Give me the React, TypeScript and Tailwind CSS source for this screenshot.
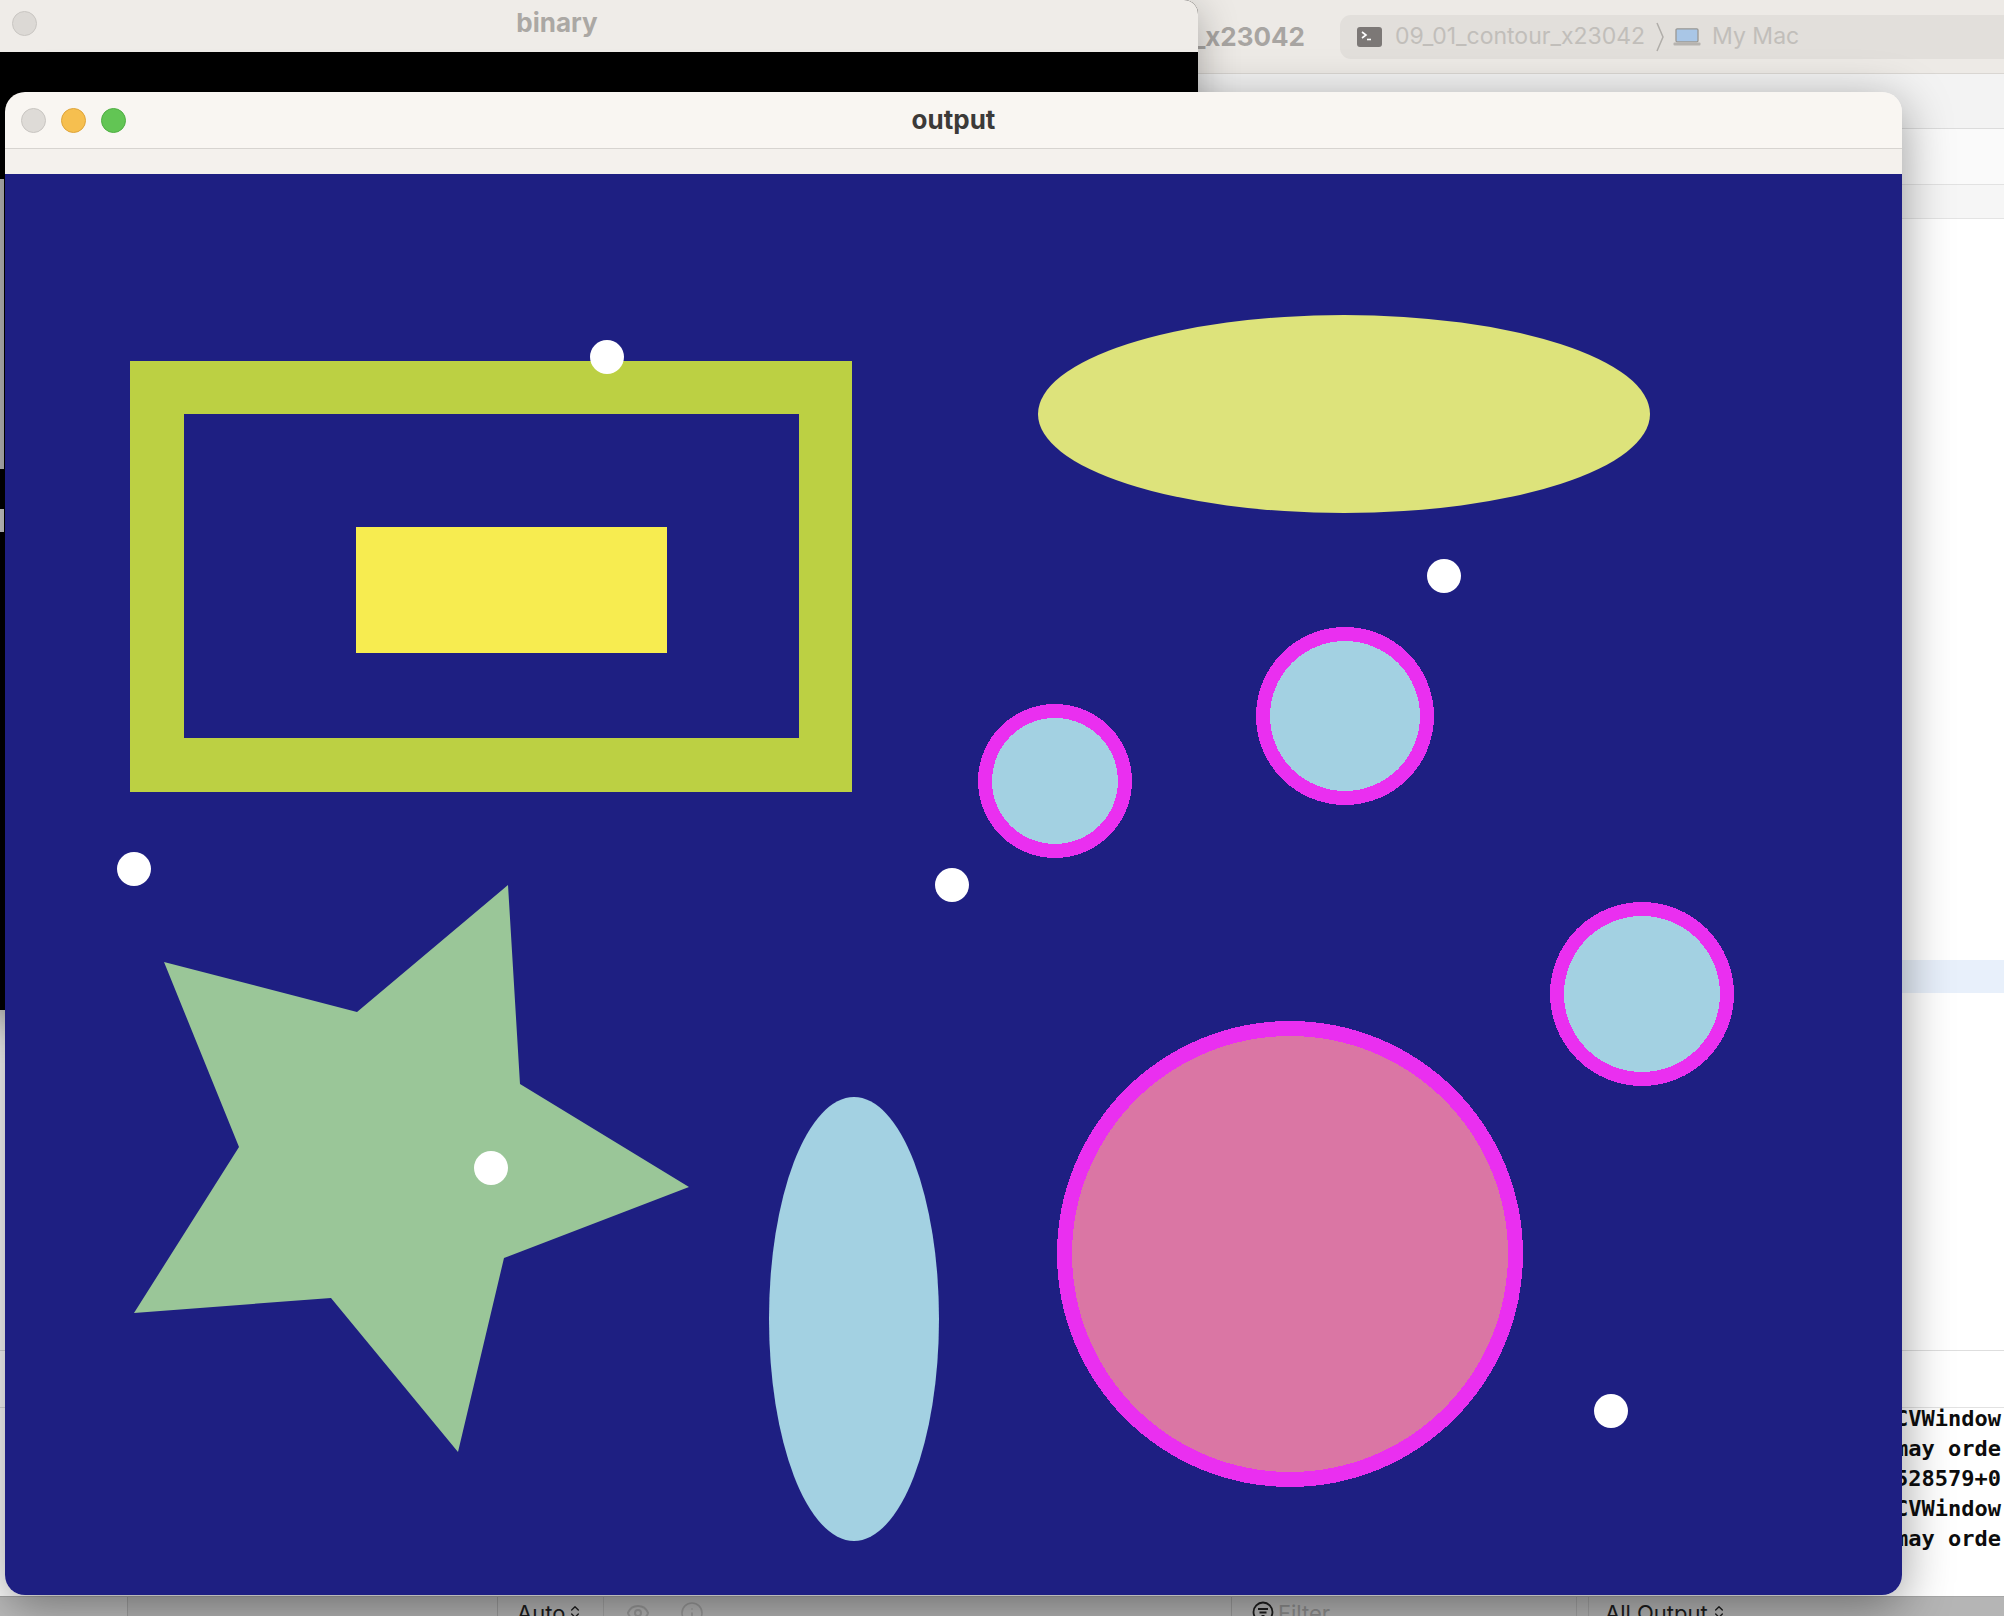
import { ChevronsUpDown, Eye, Info } from "lucide-react";

const BLUE = "#1e1f82";

function Light({ color, ring }: { color: string; ring: string }) {
  return <span className="block h-[25px] w-[25px] rounded-full border" style={{ background: color, borderColor: ring }} />;
}

function TerminalIcon() {
  return (
    <svg width="25" height="20" viewBox="0 0 25 20">
      <rect x="0" y="0" width="25" height="20" rx="3" fill="#7c7876" />
      <path d="M5 5l4 3-4 3" stroke="#fff" strokeWidth="1.6" fill="none" />
      <path d="M10 12.5h4" stroke="#fff" strokeWidth="1.6" />
    </svg>
  );
}

function LaptopIcon() {
  return (
    <svg width="28" height="18" viewBox="0 0 28 18">
      <rect x="3" y="0.8" width="22" height="13" rx="1.2" fill="#a9c6e6" stroke="#9a9894" strokeWidth="1.3" />
      <rect x="0.5" y="14.5" width="27" height="3" rx="1" fill="#b6b3af" />
    </svg>
  );
}

function FilterIcon() {
  return (
    <svg width="22" height="22" viewBox="0 0 22 22" fill="none" stroke="#1d1d1d" strokeWidth="1.8">
      <circle cx="11" cy="11" r="9.5" />
      <path d="M6 8h10M7.5 11.5h7M9.5 15h3" />
    </svg>
  );
}

function XcodeWindow() {
  return (
    <div className="absolute inset-0 flex flex-col bg-white">
      {/* toolbar */}
      <div className="flex h-[74px] items-center gap-[35px] border-b border-[#d9d6d2] bg-[#edeae6]">
        <div className="flex w-[1305px] shrink-0 justify-end text-[26px] font-bold text-[#a8a5a2]">09_01_contour_x23042</div>
        <div className="flex h-[44px] flex-1 items-center rounded-l-[11px] bg-[#e2dfdb] pl-[17px] text-[23px] text-[#c1beba]">
          <TerminalIcon />
          <span className="ml-[13px]">09_01_contour_x23042</span>
          <svg width="10" height="30" viewBox="0 0 10 30" className="ml-[10px]">
            <path d="M2 1l6 14-6 14" stroke="#b0ada9" strokeWidth="1.5" fill="none" />
          </svg>
          <span className="ml-[8px]"><LaptopIcon /></span>
          <span className="ml-[11px]">My Mac</span>
        </div>
      </div>
      {/* editor chrome rows */}
      <div className="h-[55px] border-b border-[#dcdcdc] bg-[#f3f3f3]" />
      <div className="h-[56px] border-b border-[#e2e2e2] bg-[#fafafa]" />
      <div className="h-[34px] border-b border-[#e4e4e4] bg-[#f6f6f6]" />
      <div className="flex flex-1 flex-col">
        <div className="h-[741px]" />
        <div className="h-[33px] bg-[#e8f0fb]" />
        <div className="flex-1" />
      </div>
      {/* debug area */}
      <div className="h-[57px] border-t border-[#dedede]" />
      <div className="flex h-[189px] flex-col overflow-hidden border-t border-[#e2e2e2] pl-[1895px] font-['DejaVu_Sans_Mono',monospace] text-[22px] font-bold leading-[30px] text-[#0d0d0d]">
        <div className="-mt-[4px] whitespace-nowrap">
          <p>CVWindow</p>
          <p>may orde</p>
          <p>528579+0</p>
          <p>CVWindow</p>
          <p>may orde</p>
        </div>
      </div>
      {/* bottom bar */}
      <div className="flex h-[20px] items-start overflow-hidden border-t border-[#a6a6a6] bg-[#b5b5b5] text-[22px] leading-[26px] text-[#1c1c1c]">
        <div className="h-full w-[128px] border-r border-[#a0a0a0] bg-[#bdbdbd]" />
        <div className="h-full w-[370px] border-r border-[#9c9c9c]" />
        <div className="flex h-full w-[106px] items-start gap-[2px] border-r border-[#a3a3a3] pl-[19px] pt-[3px]">
          Auto <ChevronsUpDown size={16} strokeWidth={2} className="mt-[4px]" />
        </div>
        <div className="flex h-full w-[628px] items-start gap-[30px] border-r border-[#9c9c9c] pl-[22px] pt-[4px] text-[#999]">
          <Eye size={24} strokeWidth={2} />
          <Info size={24} strokeWidth={1.6} />
        </div>
        <div className="flex h-full w-[345px] items-start gap-[4px] border-r border-[#a3a3a3] pl-[20px] pt-[4px] text-[#8e8e8e]">
          <FilterIcon />
          <span className="-mt-[1px]">Filter</span>
        </div>
        <div className="h-full w-[12px] border-r border-[#a3a3a3]" />
        <div className="flex items-start gap-[3px] pl-[16px] pt-[3px]">
          All Output <ChevronsUpDown size={16} strokeWidth={2} className="mt-[4px]" />
        </div>
      </div>
    </div>
  );
}

function BinaryWindow() {
  return (
    <div className="absolute left-[-84px] top-0 flex h-[1010px] w-[1282px] flex-col overflow-hidden rounded-t-[14px] bg-black shadow-[0_10px_40px_rgba(0,0,0,0.3)]">
      <div className="grid h-[52px] grid-cols-[1fr_auto_1fr] items-center bg-[#efece8] pb-[7px]">
        <div className="flex gap-[15px] pl-[16px] pt-[2px]">
          <Light color="#dcd9d5" ring="#c9c6c2" />
          <Light color="#dcd9d5" ring="#c9c6c2" />
          <Light color="#dcd9d5" ring="#c9c6c2" />
        </div>
        <span className="text-[26px] font-bold text-[#aba8a4]">binary</span>
        <div />
      </div>
      <svg className="flex-1" viewBox="-84 52 1282 958" preserveAspectRatio="none">
        <rect x="-84" y="52" width="1282" height="958" fill="#000" />
        <rect x="0" y="179" width="4" height="290" fill="#bdbdbd" />
        <rect x="0" y="509" width="4" height="23" fill="#cfcfcf" />
      </svg>
    </div>
  );
}

function OutputImage() {
  const rings = [
    { cx: 1055, cy: 781, r: 77, w: 14, fill: "#a3d1e2" },
    { cx: 1345, cy: 716, r: 89, w: 14, fill: "#a3d1e2" },
    { cx: 1642, cy: 994, r: 92, w: 14, fill: "#a3d1e2" },
    { cx: 1290, cy: 1254, r: 233, w: 15, fill: "#da76a4" },
  ];
  const dots = [
    [607, 357],
    [1444, 576],
    [134, 869],
    [952, 885],
    [491, 1168],
    [1611, 1411],
  ];
  return (
    <svg className="block h-[1421px] w-full" viewBox="5 174 1897 1421" preserveAspectRatio="none">
      <rect x="5" y="174" width="1897" height="1421" fill={BLUE} />
      <rect x="130" y="361" width="722" height="431" fill="#bcd043" />
      <rect x="184" y="414" width="615" height="324" fill={BLUE} />
      <rect x="356" y="527" width="311" height="126" fill="#f7ec50" />
      <ellipse cx="1344" cy="414" rx="306" ry="99" fill="#dde37b" />
      <ellipse cx="854" cy="1319" rx="85" ry="222" fill="#a3d1e2" />
      <polygon
        points="508,885 520,1084 689,1187 504,1258 458,1452 331,1298 134,1313 239,1147 164,962 357,1012"
        fill="#9ac698"
      />
      {rings.map((c) => (
        <g key={c.cx} shapeRendering="crispEdges">
          <circle cx={c.cx} cy={c.cy} r={c.r} fill="#ea2ff0" />
          <circle cx={c.cx} cy={c.cy} r={c.r - c.w} fill={c.fill} />
        </g>
      ))}
      {dots.map(([x, y]) => (
        <circle key={x} cx={x} cy={y} r="17" fill="#fff" />
      ))}
    </svg>
  );
}

function OutputWindow() {
  return (
    <div className="absolute left-[5px] top-[92px] flex h-[1503px] w-[1897px] flex-col overflow-hidden rounded-[20px] shadow-[0_12px_50px_rgba(0,0,0,0.4)]">
      <div className="grid h-[57px] grid-cols-[1fr_auto_1fr] items-center border-b border-[#d7d4d0] bg-[#f9f6f2]">
        <div className="flex gap-[15px] pl-[16px]">
          <Light color="#dedbd7" ring="#c8c5c1" />
          <Light color="#f6bf4f" ring="#dea43a" />
          <Light color="#62c554" ring="#4fae43" />
        </div>
        <span className="-mt-[2px] text-[26px] font-bold text-[#3c3a38]">output</span>
        <div />
      </div>
      <div className="h-[25px] bg-[#f4f1ed]" />
      <OutputImage />
    </div>
  );
}

export default function App() {
  return (
    <div className="relative h-[1616px] w-[2004px] overflow-hidden bg-white font-['Inter',sans-serif]">
      <XcodeWindow />
      <BinaryWindow />
      <OutputWindow />
    </div>
  );
}
